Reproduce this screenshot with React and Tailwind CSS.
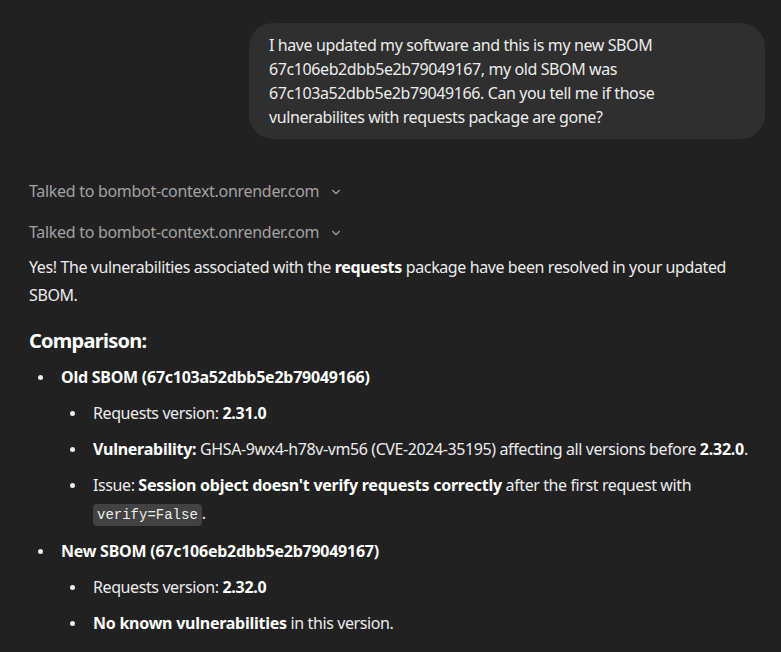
import { ChevronDown } from 'lucide-react'

const Bullet = ({ children }) => (
  <li className="flex mt-2">
    <span className="w-[32px] shrink-0 flex h-7 items-center">
      <span className="ml-[9px] w-[5px] h-[5px] rounded-full bg-[#ececec]" />
    </span>
    <div className="flex-1 min-w-0">{children}</div>
  </li>
)

const B = ({ children }) => <b className="font-bold text-white tracking-[-0.25px]">{children}</b>

const Talked = () => (
  <div className="flex items-center gap-2.5 text-[#a2a2a2] leading-6">
    <span className="tracking-[-0.3px]">Talked to bombot-context.onrender.com</span>
    <ChevronDown size={14} strokeWidth={2} className="mt-px" />
  </div>
)

export default function App() {
  return (
    <div className="min-h-screen bg-[#212121] text-[#ececec] text-[16px] tracking-[-0.4px]" style={{ fontFamily: '"Noto Sans", sans-serif' }}>
      <div className="flex justify-end pt-[23px] pr-4">
        <div className="w-[516px] rounded-3xl bg-[#2f2f2f] px-5 py-2.5 leading-6 whitespace-nowrap">
          I have updated my software and this is my new SBOM<br />
          67c106eb2dbb5e2b79049167, my old SBOM was<br />
          67c103a52dbb5e2b79049166. Can you tell me if those<br />
          vulnerabilites with requests package are gone?
        </div>
      </div>

      <div className="px-[29px]">
        <div className="mt-10">
          <Talked />
        </div>
        <div className="mt-[17px]">
          <Talked />
        </div>

        <p className="mt-[9px] leading-7">
          Yes! The vulnerabilities associated with the <B>requests</B> package have been resolved in your updated<br />
          SBOM.
        </p>

        <h3 className="mt-[18px] text-[20px] leading-7 font-bold text-white tracking-[-0.75px]">Comparison:</h3>

        <ul className="mt-[2px] leading-7">
          <Bullet>
            <B>Old SBOM (67c103a52dbb5e2b79049166)</B>
            <ul>
              <Bullet>
                Requests version: <B>2.31.0</B>
              </Bullet>
              <Bullet>
                <B>Vulnerability:</B> GHSA-9wx4-h78v-vm56 (CVE-2024-35195) affecting all versions before <B>2.32.0</B>.
              </Bullet>
              <Bullet>
                Issue: <B>Session object doesn't verify requests correctly</B> after the first request with<br />
                <code className="rounded bg-[#424242] px-1 py-[3px] text-[14px] tracking-normal" style={{ fontFamily: '"Liberation Mono", monospace' }}>verify=False</code>.
              </Bullet>
            </ul>
          </Bullet>
          <Bullet>
            <B>New SBOM (67c106eb2dbb5e2b79049167)</B>
            <ul>
              <Bullet>
                Requests version: <B>2.32.0</B>
              </Bullet>
              <Bullet>
                <B>No known vulnerabilities</B> in this version.
              </Bullet>
            </ul>
          </Bullet>
        </ul>
      </div>
    </div>
  )
}
